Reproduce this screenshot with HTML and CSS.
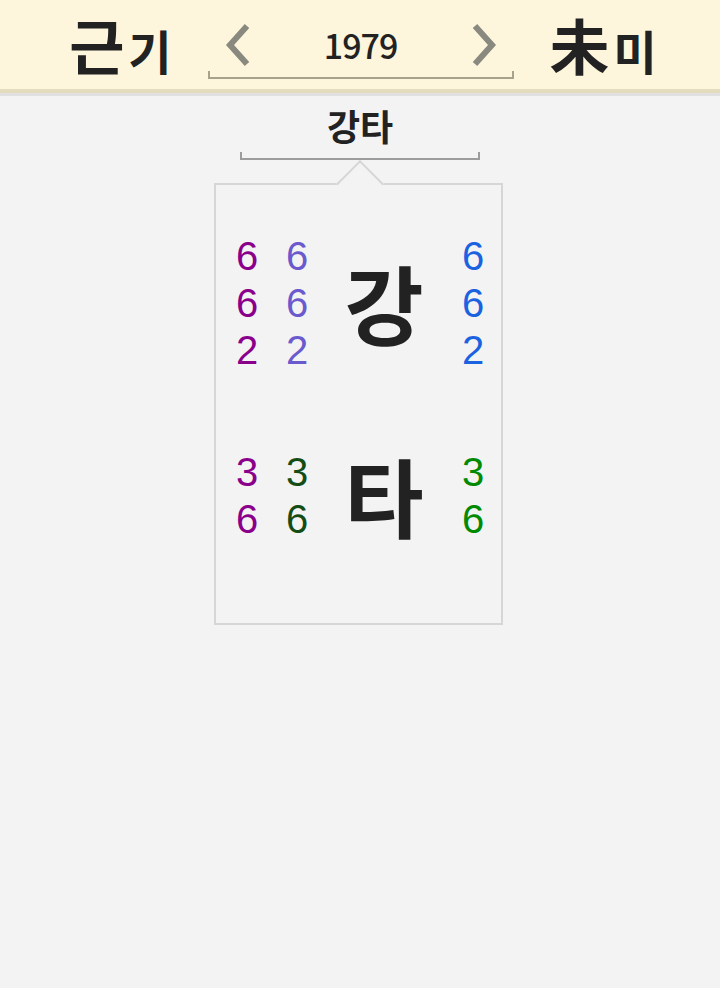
FILE: index.html
```html
<!DOCTYPE html>
<html lang="ko">
<head>
  <meta charset="UTF-8">
  <title>강타</title>
  <link rel="stylesheet" href="styles.css">
</head>
<body>

  <header class="topbar">
    <div class="pillar">
      <span class="pillar-main">근</span><span class="pillar-sub">기</span>
    </div>

    <div class="year-nav">
      <div class="year-row">
        <svg class="chev" width="26" height="44" viewBox="0 0 26 44">
          <polyline points="22,3 5,22 22,41" fill="none" stroke="#8a897f" stroke-width="6"/>
        </svg>
        <span class="year">1979</span>
        <svg class="chev" width="26" height="44" viewBox="0 0 26 44">
          <polyline points="4,3 21,22 4,41" fill="none" stroke="#8a897f" stroke-width="6"/>
        </svg>
      </div>
      <div class="bracket nav-bracket"></div>
    </div>

    <div class="pillar">
      <span class="pillar-main">未</span><span class="pillar-sub">미</span>
    </div>
  </header>

  <main class="content">
    <div class="name-label">강타</div>
    <div class="bracket name-bracket"></div>

    <div class="card">
      <div class="group">
        <div class="digits">
          <span class="c-purple">6</span>
          <span class="c-purple">6</span>
          <span class="c-purple">2</span>
        </div>
        <div class="digits">
          <span class="c-slate">6</span>
          <span class="c-slate">6</span>
          <span class="c-slate">2</span>
        </div>
        <div class="syllable">강</div>
        <div class="digits">
          <span class="c-blue">6</span>
          <span class="c-blue">6</span>
          <span class="c-blue">2</span>
        </div>
      </div>

      <div class="group">
        <div class="digits">
          <span class="c-purple">3</span>
          <span class="c-purple">6</span>
        </div>
        <div class="digits">
          <span class="c-darkgreen">3</span>
          <span class="c-darkgreen">6</span>
        </div>
        <div class="syllable">타</div>
        <div class="digits">
          <span class="c-green">3</span>
          <span class="c-green">6</span>
        </div>
      </div>
    </div>
  </main>

</body>
</html>
```

FILE: styles.css
```css
body {
  margin: 0;
  padding: 0;
  background-color: #f3f3f3;
  font-family: "Noto Sans CJK KR", "Noto Sans", sans-serif;
  color: #222;
}

.topbar {
  height: 89px;
  display: flex;
  align-items: center;
  justify-content: center;
  gap: 36px;
  padding-left: 6px;
  background-color: #fdf6dc;
  border-bottom: 4px solid #e4dcbf;
  box-shadow: 0 3px 0 #e0e0e0;
}

.pillar {
  align-self: flex-start;
  display: flex;
  align-items: baseline;
  gap: 4px;
  font-weight: 700;
  line-height: 87px;
}

.pillar-main {
  font-size: 60px;
}

.pillar-sub {
  font-size: 47px;
}

.year-nav {
  width: 306px;
  margin-top: 12px;
}

.year-row {
  display: flex;
  align-items: center;
  justify-content: space-between;
  padding: 0 17px;
  height: 44px;
}

.year {
  font-size: 34px;
  font-weight: 500;
  line-height: 44px;
  letter-spacing: -1px;
}

.chev {
  display: block;
}

.bracket {
  height: 6px;
  border: 2px solid #a6a28c;
  border-top: none;
}

.nav-bracket {
  margin-top: 4px;
}

.content {
  display: flex;
  flex-direction: column;
  align-items: center;
}

.name-label {
  margin-top: 8px;
  font-size: 36px;
  font-weight: 700;
  line-height: 48px;
}

.name-bracket {
  width: 236px;
  margin-top: 3px;
  border-color: #9c9c9c;
}

.card {
  position: relative;
  width: 285px;
  height: 438px;
  margin-top: 23px;
  margin-left: -3px;
  border: 2px solid #d6d6d6;
}

.card::before {
  content: "";
  position: absolute;
  left: 50%;
  top: -18px;
  width: 32px;
  height: 32px;
  margin-left: -16px;
  transform: rotate(45deg);
  background-color: #f3f3f3;
  border-top: 2px solid #d6d6d6;
  border-left: 2px solid #d6d6d6;
}

.group {
  display: grid;
  grid-template-columns: 50px 50px 124px 54px;
  align-items: center;
  padding-left: 6px;
}

.group:first-child {
  margin-top: 45px;
}

.group + .group {
  margin-top: 69px;
}

.digits {
  display: flex;
  flex-direction: column;
  align-items: center;
  padding-top: 3px;
  font-family: "Liberation Sans", Arial, sans-serif;
  font-size: 40px;
  line-height: 47px;
}

.syllable {
  text-align: center;
  font-size: 86px;
  font-weight: 700;
  line-height: 1.2;
}

.c-purple { color: #8b008b; }
.c-slate { color: #6a5acd; }
.c-blue { color: #1a62e0; }
.c-darkgreen { color: #144d14; }
.c-green { color: #008a00; }
```
